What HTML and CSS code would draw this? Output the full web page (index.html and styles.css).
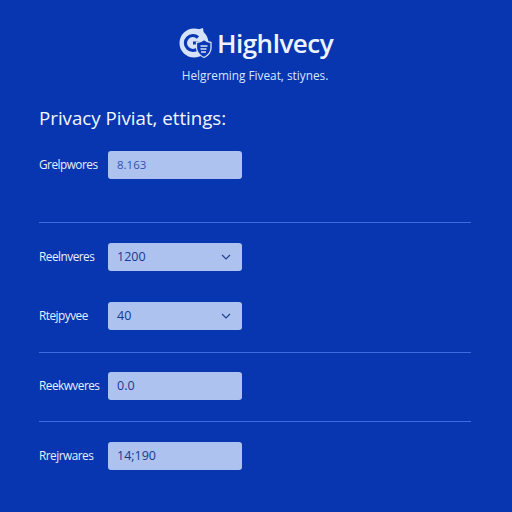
FILE: index.html
```html
<!DOCTYPE html>
<html lang="en">
<head>
<meta charset="utf-8">
<title>Highlvecy</title>
<link rel="stylesheet" href="styles.css">
</head>
<body>
<main class="page">
  <header class="brand">
    <div class="logo">
      <svg class="logo-icon" width="33" height="32" viewBox="0 0 33 32" aria-hidden="true">
        <circle cx="15" cy="16" r="14.500" fill="#d5e2fa"/>
        <path d="M19 2.500 L24 1 L25 8 Z" fill="#d5e2fa"/>
        <path d="M19 10.500 A7.500 7.500 0 1 0 19 21.500 L19 16 L14 16" fill="none" stroke="#0b38b2" stroke-width="3.200"/>
        <path d="M17.500 15.500 Q22.500 15 25 12.500 Q28 15 32 15.500 L32 21.500 Q31.500 27.500 25 30.500 Q18.500 27.500 17.500 21.500 Z" fill="#0b38b2" stroke="#d5e2fa" stroke-width="1.300"/>
        <path d="M21.500 19 H28.500 M21.500 22 H27.500 M22 25 H27" fill="none" stroke="#d5e2fa" stroke-width="1.600"/>
      </svg>
      <span class="logo-name">Highlvecy</span>
    </div>
    <p class="tagline">Helgreming Fiveat, stiynes.</p>
  </header>

  <h1 class="title">Privacy Piviat, ettings:</h1>

  <div class="row row-first">
    <span class="label">Grelpwores</span>
    <div class="field"><span class="value value-dim">8.163</span></div>
  </div>
  <hr class="rule rule-a">

  <div class="row">
    <span class="label">Reelnveres</span>
    <div class="field">
      <span class="value">1200</span>
      <svg class="chev" width="10" height="6" viewBox="0 0 10 6" aria-hidden="true"><path d="M1 1 L5 5 L9 1" fill="none" stroke="#21428f" stroke-width="1.200"/></svg>
    </div>
  </div>
  <div class="row row-gap">
    <span class="label">Rtejpyvee</span>
    <div class="field">
      <span class="value">40</span>
      <svg class="chev" width="10" height="6" viewBox="0 0 10 6" aria-hidden="true"><path d="M1 1 L5 5 L9 1" fill="none" stroke="#21428f" stroke-width="1.200"/></svg>
    </div>
  </div>
  <hr class="rule rule-b">

  <div class="row">
    <span class="label">Reekwveres</span>
    <div class="field"><span class="value">0.0</span></div>
  </div>
  <hr class="rule rule-c">

  <div class="row">
    <span class="label">Rrejrwares</span>
    <div class="field"><span class="value">14;190</span></div>
  </div>
</main>
</body>
</html>
```

FILE: styles.css
```css
* { box-sizing: border-box; }
html, body { margin: 0; height: 100%; }
body {
  background: #0736b0;
  color: #e6eeff;
  font-family: "Open Sans", "Liberation Sans", sans-serif;
  overflow: hidden;
}
.page { padding: 27px 41px 0 39px; height: 512px; }
.brand { display: flex; flex-direction: column; align-items: center; }
.logo { display: flex; align-items: center; gap: 5px; height: 32px; margin-left: 2px; }
.logo-name { font-size: 26px; font-weight: 600; letter-spacing: -0.5px; color: #eef4ff; }
.tagline { margin: 9px 0 0; font-size: 11.800px; line-height: 14px; color: #d8e5ff; }
.title { margin: 24px 0 0; font-size: 18.700px; line-height: 24px; font-weight: 400; color: #f2f6ff; }
.row { display: flex; align-items: center; height: 28px; }
.row-first { margin-top: 21px; }
.row-gap { margin-top: 31px; }
.label { width: 69px; margin-top: -2px; font-size: 11.800px; letter-spacing: -0.5px; white-space: nowrap; color: #e8efff; }
.field {
  width: 134px;
  height: 28px;
  padding: 0 9px;
  display: flex;
  align-items: center;
  justify-content: space-between;
  background: #aec2ef;
  border-radius: 3px;
}
.value { margin-top: -1px; font-size: 12.500px; color: #17398f; }
.value-dim { font-size: 11.500px; color: #2f55ad; }
.chev { margin-right: 2px; }
.rule { margin: 0; border: 0; height: 1px; background: #3d6bdf; }
.rule-a { margin-top: 43px; margin-bottom: 20px; }
.rule-b { margin-top: 22px; margin-bottom: 19px; }
.rule-c { margin-top: 21px; margin-bottom: 20px; }
```
